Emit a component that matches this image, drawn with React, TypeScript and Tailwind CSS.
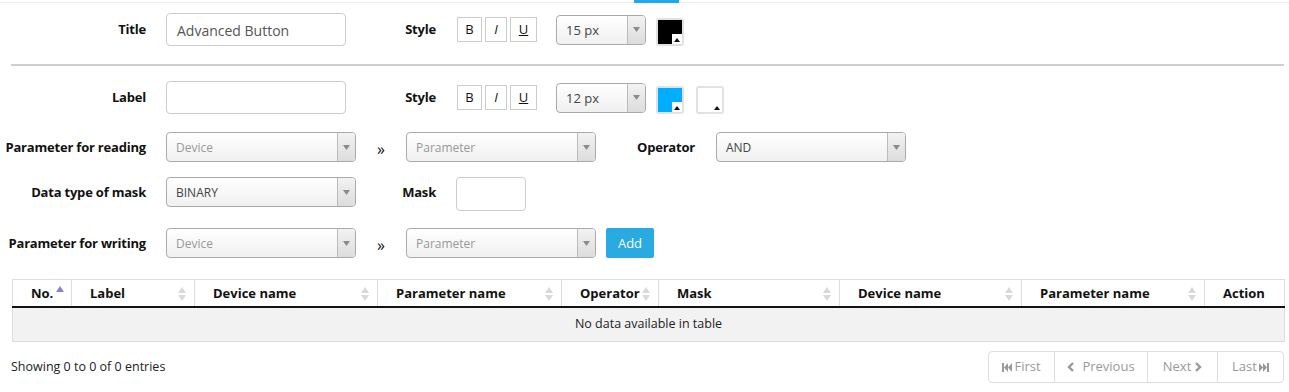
import React from "react";

const FONT = { fontFamily: '"Open Sans", "Liberation Sans", sans-serif' };

const Caret = () => (
  <svg width="7" height="5" viewBox="0 0 7 5">
    <path d="M0 0h7L3.5 5z" fill="#8a8a8a" />
  </svg>
);

const Select = ({
  text,
  placeholder,
  w,
  h = "h-[30px]",
  size = "text-[12px]",
}: {
  text: string;
  placeholder?: boolean;
  w: string;
  h?: string;
  size?: string;
}) => (
  <div
    className={`flex ${w} ${h} overflow-hidden rounded-[4px] border border-[#aaa] bg-linear-to-b from-white to-[#f0f0f0]`}
  >
    <div
      className={`flex flex-1 items-center pl-[9px] pt-[2px] ${size} ${
        placeholder ? "text-[#999]" : "text-[#444]"
      }`}
    >
      {text}
    </div>
    <div className="flex w-[18px] items-center justify-center border-l border-[#bbb] bg-linear-to-b from-[#f2f2f2] to-[#dcdcdc]">
      <Caret />
    </div>
  </div>
);

const Label = ({ children, w = "w-[146px]" }: { children: React.ReactNode; w?: string }) => (
  <div className={`${w} shrink-0 pt-[1px] text-right text-[13px] font-bold tracking-[-0.2px] text-[#111]`}>
    {children}
  </div>
);

const StyleButtons = () => (
  <div className="flex gap-[3px]">
    <div className="flex h-[25px] w-[25px] items-center justify-center border border-[#ccc] bg-white text-[13px] text-[#111]">
      B
    </div>
    <div className="flex h-[25px] w-[22px] items-center justify-center border border-[#ccc] bg-white text-[13px] italic text-[#111]">
      I
    </div>
    <div className="flex h-[25px] w-[27px] items-center justify-center border border-[#ccc] bg-white text-[13px] text-[#111] underline">
      U
    </div>
  </div>
);

const Swatch = ({ color }: { color: string }) => (
  <div className="relative h-[28px] w-[28px] rounded-[3px] border-2 border-[#dfe1e5] bg-white">
    <div className="h-full w-full" style={{ background: color }} />
    <div className="absolute bottom-0 right-0 flex h-[10px] w-[10px] items-end justify-center bg-white pb-[2px]">
      <svg width="6" height="4" viewBox="0 0 6 4">
        <path d="M0 4h6L3 0z" fill="#111" />
      </svg>
    </div>
  </div>
);

const Chevrons = () => (
  <div className="flex w-[50px] justify-center pt-[3px] text-[16px] text-[#111]">»</div>
);

const SortIcon = ({ active }: { active?: boolean }) =>
  active ? (
    <svg width="8" height="6" viewBox="0 0 8 6">
      <path d="M0 6h8L4 0z" fill="#7f83df" />
    </svg>
  ) : (
    <svg width="8" height="14" viewBox="0 0 8 14">
      <path d="M0 6h8L4 0z" fill="#d9d9d9" />
      <path d="M0 8h8L4 14z" fill="#d9d9d9" />
    </svg>
  );

const columns: { name: string; w: number; sort?: "active" | "none" | "both" }[] = [
  { name: "No.", w: 59, sort: "active" },
  { name: "Label", w: 123, sort: "both" },
  { name: "Device name", w: 183, sort: "both" },
  { name: "Parameter name", w: 184, sort: "both" },
  { name: "Operator", w: 97, sort: "both" },
  { name: "Mask", w: 181, sort: "both" },
  { name: "Device name", w: 182, sort: "both" },
  { name: "Parameter name", w: 183, sort: "both" },
  { name: "Action", w: 80, sort: "none" },
];

const BackIcon = () => (
  <svg width="10" height="9" viewBox="0 0 10 9">
    <path d="M0 0h2v9H0z M2 4.5L6 0v9z M6 4.5L10 0v9z" fill="#999" />
  </svg>
);
const FwdIcon = () => (
  <svg width="10" height="9" viewBox="0 0 10 9">
    <path d="M8 0h2v9H8z M8 4.5L4 0v9z M4 4.5L0 0v9z" fill="#999" />
  </svg>
);
const ChevL = () => (
  <svg width="7" height="10" viewBox="0 0 7 10">
    <path d="M6 1L2 5l4 4" stroke="#999" strokeWidth="2.4" fill="none" />
  </svg>
);
const ChevR = () => (
  <svg width="7" height="10" viewBox="0 0 7 10">
    <path d="M1 1l4 4-4 4" stroke="#999" strokeWidth="2.4" fill="none" />
  </svg>
);

export default function App() {
  return (
    <div className="h-[392px] w-[1289px] overflow-hidden bg-white" style={FONT}>
      {/* top tab line */}
      <div className="relative h-[3px] border-b border-[#ececec]">
        <div className="absolute left-[634px] top-0 h-[3px] w-[45px] bg-[#1fa8f0]" />
      </div>

      {/* Title row */}
      <div className="mt-[10px] flex h-[33px] items-center">
        <Label>Title</Label>
        <div className="ml-[20px] flex h-[33px] w-[180px] items-center rounded-[4px] border border-[#ccc] px-[10px] pt-[1px] text-[14px] text-[#555]">
          Advanced Button
        </div>
        <Label w="w-[90px]">Style</Label>
        <div className="ml-[21px]">
          <StyleButtons />
        </div>
        <div className="ml-[19px]">
          <Select text="15 px" w="w-[90px]" size="text-[13px]" />
        </div>
        <div className="ml-[10px] mt-[4px]">
          <Swatch color="#000" />
        </div>
      </div>

      <div className="ml-[11px] mt-[18px] h-[2px] w-[1273px] bg-[#cfcfcf]" />

      {/* Label row */}
      <div className="mt-[15px] flex h-[33px] items-center">
        <Label>Label</Label>
        <div className="ml-[20px] h-[33px] w-[180px] rounded-[4px] border border-[#ccc]" />
        <Label w="w-[90px]">Style</Label>
        <div className="ml-[21px]">
          <StyleButtons />
        </div>
        <div className="ml-[19px]">
          <Select text="12 px" w="w-[90px]" size="text-[13px]" />
        </div>
        <div className="ml-[10px] mt-[4px]">
          <Swatch color="#00aeff" />
        </div>
        <div className="ml-[12px] mt-[4px]">
          <Swatch color="#fff" />
        </div>
      </div>

      {/* Parameter for reading */}
      <div className="mt-[18px] flex items-center">
        <Label>Parameter for reading</Label>
        <div className="ml-[20px]">
          <Select text="Device" placeholder w="w-[190px]" />
        </div>
        <Chevrons />
        <Select text="Parameter" placeholder w="w-[190px]" />
        <Label w="w-[99px]">Operator</Label>
        <div className="ml-[21px]">
          <Select text="AND" w="w-[190px]" />
        </div>
      </div>

      {/* Data type of mask */}
      <div className="mt-[15px] flex items-start">
        <div className="flex h-[30px] items-center">
          <Label>Data type of mask</Label>
        </div>
        <div className="ml-[20px]">
          <Select text="BINARY" w="w-[190px]" />
        </div>
        <div className="flex h-[30px] items-center">
          <Label w="w-[80px]">Mask</Label>
        </div>
        <div className="ml-[20px] h-[34px] w-[70px] rounded-[4px] border border-[#ccc]" />
      </div>

      {/* Parameter for writing */}
      <div className="mt-[17px] flex items-center">
        <Label>Parameter for writing</Label>
        <div className="ml-[20px]">
          <Select text="Device" placeholder w="w-[190px]" />
        </div>
        <Chevrons />
        <Select text="Parameter" placeholder w="w-[190px]" />
        <div className="ml-[10px] flex h-[30px] w-[48px] items-center justify-center rounded-[2px] bg-[#29abe2] pt-[1px] text-[13px] text-white">
          Add
        </div>
      </div>

      {/* Table */}
      <table className="ml-[12px] mt-[21px] w-[1272px] table-fixed border-collapse">
        <colgroup>
          {columns.map((c, i) => (
            <col key={i} style={{ width: c.w }} />
          ))}
        </colgroup>
        <thead>
          <tr className="h-[27px]">
            {columns.map((c, i) => (
              <th
                key={i}
                className="relative border border-b-2 border-[#ddd] border-b-[#111] pl-[18px] pt-[1px] text-left text-[13px] font-bold text-[#111]"
              >
                {c.name}
                {c.sort === "active" && (
                  <span className="absolute right-[7px] top-[6px] flex">
                    <SortIcon active />
                  </span>
                )}
                {c.sort === "both" && (
                  <span className="absolute right-[8px] top-[7px] flex">
                    <SortIcon />
                  </span>
                )}
              </th>
            ))}
          </tr>
        </thead>
        <tbody>
          <tr className="h-[35px] bg-[#f2f2f2]">
            <td colSpan={9} className="border border-t-0 border-[#ddd] pt-[1px] text-center text-[12.5px] text-[#222]">
              No data available in table
            </td>
          </tr>
        </tbody>
      </table>

      {/* Footer */}
      <div className="ml-[11px] mt-[9px] flex w-[1273px] items-center justify-between">
        <div className="text-[12.5px] text-[#222]">Showing 0 to 0 of 0 entries</div>
        <div className="flex h-[32px] overflow-hidden rounded-[4px] border border-[#ddd] text-[13px] text-[#999]">
          <div className="flex w-[66px] items-center justify-center gap-[2px] border-r border-[#ddd]">
            <BackIcon />
            First
          </div>
          <div className="flex w-[93px] items-center justify-center gap-[8px] border-r border-[#ddd]">
            <ChevL />
            Previous
          </div>
          <div className="flex w-[70px] items-center justify-center gap-[4px] border-r border-[#ddd]">
            Next
            <ChevR />
          </div>
          <div className="flex w-[65px] items-center justify-center gap-[2px]">
            Last
            <FwdIcon />
          </div>
        </div>
      </div>
    </div>
  );
}
